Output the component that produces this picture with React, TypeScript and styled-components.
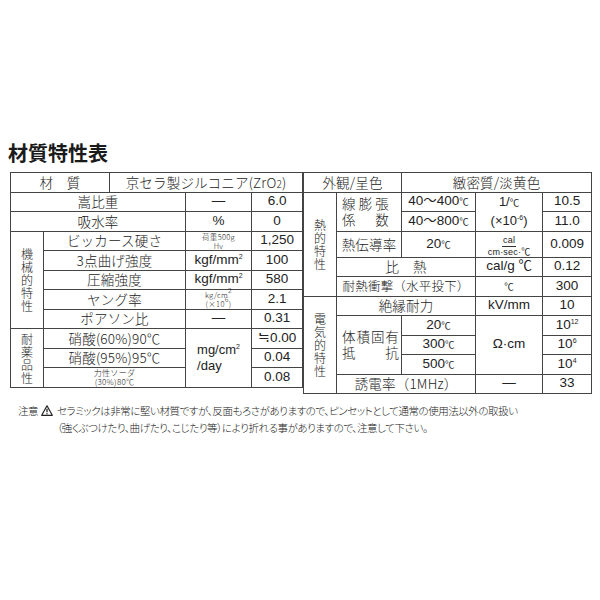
import React from "react";
import styled, { createGlobalStyle } from "styled-components";

const GlobalStyle = createGlobalStyle`
  html, body {
    margin: 0;
    padding: 0;
    background: #ffffff;
  }
  body {
    font-family: "Liberation Sans", "Noto Sans CJK JP", sans-serif;
    color: #222222;
  }
`;

const Page = styled.div`
  width: 600px;
  height: 600px;
  box-sizing: border-box;
  padding: 141px 10px 0 10px;
`;

const Title = styled.h1`
  margin: 0 0 7px -2px;
  font-family: "Noto Sans CJK JP", sans-serif;
  font-size: 20px;
  font-weight: 700;
  line-height: 24px;
  color: #1a1a1a;
`;

const Tables = styled.div`
  display: flex;
  align-items: flex-start;
`;

const Table = styled.table<{ $width: number }>`
  width: ${({ $width }) => $width}px;
  table-layout: fixed;
  border-collapse: collapse;
  border: 1px solid #222;
  font-size: 13px;
  font-family: "Liberation Sans", "Noto Sans CJK JP", sans-serif;

  tr {
    height: 19.5px;
  }
`;

const Cell = styled.td<{ $align?: "left" | "center" | "right" }>`
  border: 1px solid #444;
  padding: 0;
  text-align: ${({ $align }) => $align || "center"};
  vertical-align: middle;
  line-height: 1.1;
  white-space: nowrap;
`;

const Label = styled(Cell)`
  font-family: "Noto Sans CJK JP", sans-serif;
  font-size: 13.5px;
  font-weight: 300;
  letter-spacing: 0.2px;
`;

const Value = styled(Cell)`
  font-size: 13.5px;
`;

const Group = styled(Cell)`
  font-family: "Noto Sans CJK JP", sans-serif;
  font-size: 12px;
  font-weight: 300;
`;

const Vertical = styled.span`
  display: inline-flex;
  flex-direction: column;
  align-items: center;
  line-height: 13px;
`;

const Deg = styled.span`
  font-size: 9.5px;
`;

const Tiny = styled.div<{ $size?: number }>`
  font-family: "Noto Sans CJK JP", sans-serif;
  font-size: ${({ $size }) => $size || 7.5}px;
  font-weight: 300;
  line-height: 9px;
  letter-spacing: 0.3px;
`;

const Fraction = styled.span`
  display: inline-flex;
  flex-direction: column;
  align-items: center;
  font-size: 9px;
  line-height: 1;
  letter-spacing: 0.2px;
`;

const Numerator = styled.span`
  padding: 0 1px 1px;
  border-bottom: 1px solid #333;
`;

const Denominator = styled.span`
  padding-top: 1px;
`;

const Stack = styled.span`
  display: inline-block;
  text-align: left;
  font-size: 13px;
  line-height: 1.2;
`;

const Justify = styled.span<{ $width: number }>`
  display: block;
  width: ${({ $width }) => $width}px;
  margin-left: 5px;
  text-align: justify;
  text-align-last: justify;
  line-height: 1.15;
`;

const Sup = styled.sup`
  font-size: 7px;
  vertical-align: 5px;
  line-height: 0;
`;

const Note = styled.div`
  margin-top: 8px;
  padding-left: 8px;
  font-family: "Noto Sans CJK JP", sans-serif;
  font-size: 10.5px;
  font-weight: 300;
  line-height: 17px;
  color: #222;
  font-feature-settings: "palt";
  letter-spacing: -0.45px;
`;

const NoteLine = styled.div<{ $indent?: boolean }>`
  display: flex;
  align-items: center;
  padding-left: ${({ $indent }) => ($indent ? "39px" : "0")};
  white-space: nowrap;
`;

const NoteHead = styled.span`
  display: inline-flex;
  align-items: center;
  gap: 3px;
  margin-right: 3px;
  width: 36px;
`;

const Warning = () => (
  <svg width="12" height="11" viewBox="0 0 12 11">
    <path d="M6 0.8 L11.3 10.3 H0.7 Z" fill="none" stroke="#222" strokeWidth="1.2" strokeLinejoin="round" />
    <path d="M6 3.8 V7.2" stroke="#222" strokeWidth="1.3" />
    <circle cx="6" cy="8.7" r="0.7" fill="#222" />
  </svg>
);

const C = () => <Deg>℃</Deg>;

const VText = ({ text }: { text: string }) => (
  <Vertical>
    {text.split("").map((ch, i) => (
      <span key={i}>{ch}</span>
    ))}
  </Vertical>
);

const LeftTable = () => (
  <Table $width={292}>
    <colgroup>
      <col style={{ width: 33 }} />
      <col style={{ width: 66 }} />
      <col style={{ width: 76 }} />
      <col style={{ width: 66 }} />
      <col style={{ width: 51 }} />
    </colgroup>
    <tbody>
      <tr>
        <Label colSpan={2}>材　質</Label>
        <Label colSpan={3}>
          京セラ製ジルコニア(ZrO<span style={{ fontSize: 10 }}>2</span>)
        </Label>
      </tr>
      <tr>
        <Label colSpan={3}>嵩比重</Label>
        <Value>—</Value>
        <Value>6.0</Value>
      </tr>
      <tr>
        <Label colSpan={3}>吸水率</Label>
        <Value>%</Value>
        <Value>0</Value>
      </tr>
      <tr>
        <Group rowSpan={5}>
          <VText text="機械的特性" />
        </Group>
        <Label colSpan={2}>ビッカース硬さ</Label>
        <Cell>
          <Tiny>荷重500g</Tiny>
          <Tiny>Hv</Tiny>
        </Cell>
        <Value>1,250</Value>
      </tr>
      <tr>
        <Label colSpan={2}>3点曲げ強度</Label>
        <Value>
          kgf/mm<Sup>2</Sup>
        </Value>
        <Value>100</Value>
      </tr>
      <tr>
        <Label colSpan={2}>圧縮強度</Label>
        <Value>
          kgf/mm<Sup>2</Sup>
        </Value>
        <Value>580</Value>
      </tr>
      <tr>
        <Label colSpan={2}>ヤング率</Label>
        <Cell>
          <Tiny>
            kg/cm<Sup>2</Sup>
          </Tiny>
          <Tiny>
            (×10<Sup>6</Sup>)
          </Tiny>
        </Cell>
        <Value>2.1</Value>
      </tr>
      <tr>
        <Label colSpan={2}>ポアソン比</Label>
        <Value>—</Value>
        <Value>0.31</Value>
      </tr>
      <tr>
        <Group rowSpan={3}>
          <VText text="耐薬品性" />
        </Group>
        <Label colSpan={2}>硝酸(60%)90℃</Label>
        <Cell rowSpan={3}>
          <Stack>
            mg/cm<Sup>2</Sup>
            <br />
            /day
          </Stack>
        </Cell>
        <Value>≒0.00</Value>
      </tr>
      <tr>
        <Label colSpan={2}>硝酸(95%)95℃</Label>
        <Value>0.04</Value>
      </tr>
      <tr>
        <Cell colSpan={2}>
          <Tiny $size={8}>力性ソーダ</Tiny>
          <Tiny $size={8}>(30%)80℃</Tiny>
        </Cell>
        <Value>0.08</Value>
      </tr>
    </tbody>
  </Table>
);

const RightTable = () => (
  <Table $width={288}>
    <colgroup>
      <col style={{ width: 33 }} />
      <col style={{ width: 65 }} />
      <col style={{ width: 74 }} />
      <col style={{ width: 67 }} />
      <col style={{ width: 49 }} />
    </colgroup>
    <tbody>
      <tr>
        <Label colSpan={2}>外観/呈色</Label>
        <Label colSpan={3}>緻密質/淡黄色</Label>
      </tr>
      <tr>
        <Group rowSpan={5}>
          <VText text="熱的特性" />
        </Group>
        <Label rowSpan={2} $align="left">
          <Justify $width={47}>線膨張</Justify>
          <Justify $width={47}>係数</Justify>
        </Label>
        <Value>
          40～400<C />
        </Value>
        <Value rowSpan={2}>
          <Stack style={{ textAlign: "center", lineHeight: 1.45 }}>
            1/<C />
            <br />
            (×10<Sup>-6</Sup>)
          </Stack>
        </Value>
        <Value>10.5</Value>
      </tr>
      <tr>
        <Value>
          40～800<C />
        </Value>
        <Value>11.0</Value>
      </tr>
      <tr>
        <Label>熱伝導率</Label>
        <Value>
          20<C />
        </Value>
        <Cell>
          <Fraction>
            <Numerator>cal</Numerator>
            <Denominator>cm·sec·℃</Denominator>
          </Fraction>
        </Cell>
        <Value>0.009</Value>
      </tr>
      <tr>
        <Label colSpan={2}>比　熱</Label>
        <Value>cal/g ℃</Value>
        <Value>0.12</Value>
      </tr>
      <tr>
        <Label colSpan={2} style={{ fontSize: 12.5 }}>
          耐熱衝撃（水平投下）
        </Label>
        <Value>
          <C />
        </Value>
        <Value>300</Value>
      </tr>
      <tr>
        <Group rowSpan={5}>
          <VText text="電気的特性" />
        </Group>
        <Label colSpan={2}>絶縁耐力</Label>
        <Value>kV/mm</Value>
        <Value>10</Value>
      </tr>
      <tr>
        <Label rowSpan={3} $align="left">
          <Justify $width={57}>体積固有</Justify>
          <Justify $width={57}>抵抗</Justify>
        </Label>
        <Value>
          20<C />
        </Value>
        <Value rowSpan={3}>Ω·cm</Value>
        <Value>
          10<Sup>12</Sup>
        </Value>
      </tr>
      <tr>
        <Value>
          300<C />
        </Value>
        <Value>
          10<Sup>6</Sup>
        </Value>
      </tr>
      <tr>
        <Value>
          500<C />
        </Value>
        <Value>
          10<Sup>4</Sup>
        </Value>
      </tr>
      <tr>
        <Label colSpan={2}>誘電率（1MHz）</Label>
        <Value>—</Value>
        <Value>33</Value>
      </tr>
    </tbody>
  </Table>
);

const App = () => (
  <>
    <GlobalStyle />
    <Page>
      <Title>材質特性表</Title>
      <Tables>
        <LeftTable />
        <RightTable />
      </Tables>
      <Note>
        <NoteLine>
          <NoteHead>
            注意
            <Warning />
          </NoteHead>
          セラミックは非常に堅い材質ですが、反面もろさがありますので、ピンセットとして通常の使用法以外の取扱い
        </NoteLine>
        <NoteLine $indent>
          （強くぶつけたり、曲げたり、こじたり等）により折れる事がありますので、注意して下さい。
        </NoteLine>
      </Note>
    </Page>
  </>
);

export default App;
